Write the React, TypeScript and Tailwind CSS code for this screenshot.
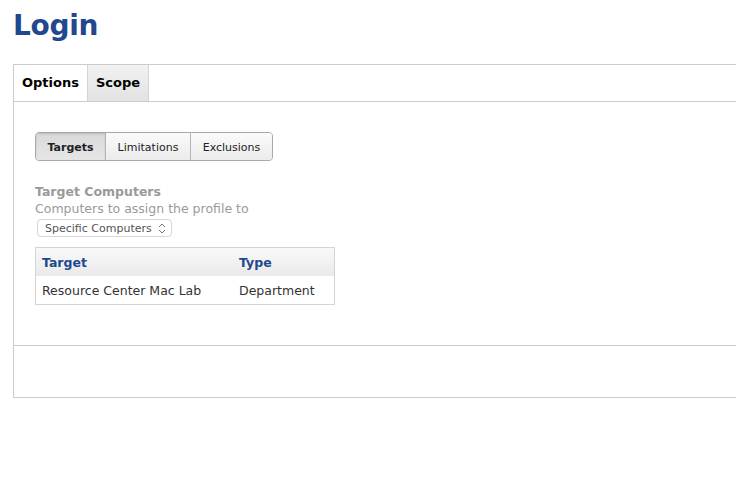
import React, { useState } from 'react';

const font = { fontFamily: '"DejaVu Sans", "Liberation Sans", sans-serif' };

export default function App() {
  const [tab, setTab] = useState('Options');
  const [seg, setSeg] = useState('Targets');

  return (
    <div className="w-[736px] h-[487px] overflow-hidden bg-white" style={font}>
      <h1 className="pl-[13px] pt-[8px] h-[64px] text-[28px] font-bold leading-[36px] tracking-[-0.3px] text-[#21488f]">
        Login
      </h1>

      <div className="ml-[13px] w-[760px] h-[334px] border border-[#cccccc] flex flex-col">
        {/* Tabs */}
        <div className="flex h-[37px] border-b border-[#cccccc]">
          {['Options', 'Scope'].map((t) => (
            <button
              key={t}
              onClick={() => setTab(t)}
              className={`h-full text-[13px] font-bold text-black border-r border-[#d4d4d4] ${
                t === 'Options'
                  ? 'w-[74px] bg-white'
                  : 'w-[61px] bg-gradient-to-b from-[#f2f2f2] to-[#e2e2e2]'
              }`}
            >
              {t}
            </button>
          ))}
        </div>

        {/* Body */}
        <div className="h-[244px] border-b border-[#cccccc] pl-[21px] pt-[30px]">
          <div className="flex w-[238px] h-[29px] border border-[#a9a9a9] rounded-[4px] overflow-hidden">
            {[
              ['Targets', 'w-[70px]'],
              ['Limitations', 'w-[85px]'],
              ['Exclusions', 'flex-1'],
            ].map(([s, w], i) => (
              <button
                key={s}
                onClick={() => setSeg(s)}
                className={`${w} h-full pt-[3px] text-[11px] text-[#222] ${i < 2 ? 'border-r border-[#b5b5b5]' : ''} ${
                  seg === s
                    ? 'bg-gradient-to-b from-[#d9d9d9] to-[#e6e6e6] font-bold shadow-[inset_0_1px_2px_rgba(0,0,0,0.15)]'
                    : 'bg-gradient-to-b from-[#fafafa] to-[#ececec]'
                }`}
              >
                {s}
              </button>
            ))}
          </div>

          <div className="mt-[22px] text-[12.5px] font-bold text-[#9a9a9a] leading-[17px]">Target Computers</div>
          <div className="text-[12.5px] text-[#9a9a9a] leading-[17px]">Computers to assign the profile to</div>

          <div className="mt-[2px] ml-[2px] flex items-center w-[135px] h-[18px] border border-[#d6d6d6] rounded-[4px] bg-white pl-[7px] pr-[5px]">
            <span className="flex-1 text-[11px] text-[#555] leading-none">Specific Computers</span>
            <svg width="8" height="11" viewBox="0 0 8 11" fill="none" stroke="#777" strokeWidth="1">
              <path d="M1 4 L4 1 L7 4" />
              <path d="M1 7 L4 10 L7 7" />
            </svg>
          </div>

          <div className="mt-[10px] w-[300px] border border-[#d4d4d4]">
            <div className="flex h-[28px] pt-[2px] items-center bg-gradient-to-b from-[#f9f9f9] to-[#eaeaea] text-[12.5px] font-bold text-[#21488f]">
              <div className="w-[203px] pl-[6px]">Target</div>
              <div>Type</div>
            </div>
            <div className="flex h-[28px] pt-[2px] items-center text-[12.5px] text-[#333]">
              <div className="w-[203px] pl-[6px]">Resource Center Mac Lab</div>
              <div>Department</div>
            </div>
          </div>
        </div>
      </div>
    </div>
  );
}
